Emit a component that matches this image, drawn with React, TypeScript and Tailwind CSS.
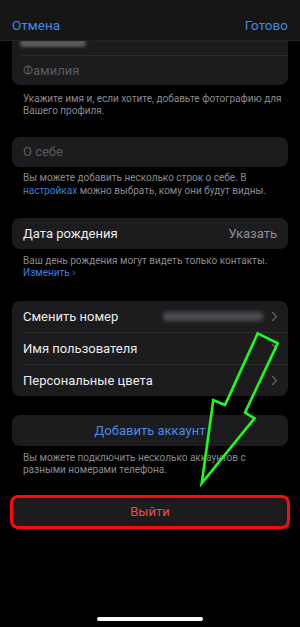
import React from "react";

const font = { fontFamily: "Roboto, 'Noto Sans', sans-serif" };

function Chevron() {
  return (
    <svg width="7" height="11" viewBox="0 0 7 11" className="shrink-0">
      <path d="M1.5 1.5 L5.5 5.5 L1.5 9.5" fill="none" stroke="#5d5d62" strokeWidth="1.5" strokeLinecap="round" strokeLinejoin="round" />
    </svg>
  );
}

export default function App() {
  return (
    <div className="relative w-[300px] h-[627px] bg-black overflow-hidden text-[#ececec]" style={font}>
      <div className="relative z-10 h-[41px] pt-[10px] px-[12px] flex items-center justify-between bg-[#161617] border-b border-[#222224]">
        <span className="text-[13.5px] text-[#3d8ae8]">Отмена</span>
        <span className="text-[13.5px] text-[#3d8ae8]">Готово</span>
      </div>
      <div className="-mt-[15px]">
        <div className="mx-[12px] rounded-[8px] bg-[#1c1c1e]">
          <div className="h-[29px] pl-[8px] flex items-center pt-[5px]">
            <div className="w-[66px] h-[7px] rounded-[3px] bg-[#5a5a5e] blur-[1.5px]" />
          </div>
          <div className="ml-[10px] h-px bg-[#2c2c2e]" />
          <div className="h-[29px] pl-[11px] flex items-center text-[13px] text-[#5b5b5f]">Фамилия</div>
        </div>
        <p className="mt-[8px] pl-[23px] pr-[12px] text-[10px] leading-[11.5px] text-[#8a8a8f]">
          Укажите имя и, если хотите, добавьте фотографию для Вашего профиля.
        </p>

        <div className="mt-[21px] mx-[12px] h-[30px] rounded-[8px] bg-[#1c1c1e] flex items-center pl-[11px] text-[13px] text-[#5b5b5f]">
          О себе
        </div>
        <p className="mt-[5px] pl-[23px] pr-[12px] text-[10px] leading-[12.5px] text-[#8a8a8f]">
          Вы можете добавить несколько строк о себе. В<br />
          <span className="text-[#3b7fd6]">настройках</span> можно выбрать, кому они будут видны.
        </p>

        <div className="mt-[21px] mx-[12px] h-[31px] rounded-[8px] bg-[#1c1c1e] flex items-center justify-between px-[11px] text-[13px]">
          <span className="text-[#ececec]">Дата рождения</span>
          <span className="text-[#8e8e93]">Указать</span>
        </div>
        <p className="mt-[6px] pl-[23px] pr-[12px] text-[10px] leading-[12px] text-[#8a8a8f]">
          Ваш день рождения могут видеть только контакты.
          <br />
          <span className="text-[#3b7fd6]">Изменить ›</span>
        </p>

        <div className="mt-[22px] mx-[12px] rounded-[8px] bg-[#1c1c1e] text-[13px]">
          <div className="h-[31px] flex items-center justify-between pl-[11px] pr-[10px]">
            <span>Сменить номер</span>
            <div className="flex items-center gap-[8px]">
              <div className="w-[100px] h-[9px] rounded-[4px] bg-[#4e4e52] blur-[2px]" />
              <Chevron />
            </div>
          </div>
          <div className="ml-[11px] h-px bg-[#2c2c2e]" />
          <div className="h-[31px] flex items-center justify-between pl-[11px] pr-[10px]">
            <span>Имя пользователя</span>
            <Chevron />
          </div>
          <div className="ml-[11px] h-px bg-[#2c2c2e]" />
          <div className="h-[31px] flex items-center justify-between pl-[11px] pr-[10px]">
            <span>Персональные цвета</span>
            <Chevron />
          </div>
        </div>

        <div className="mt-[19px] mx-[12px] h-[31px] rounded-[8px] bg-[#1c1c1e] flex items-center justify-center text-[13px] text-[#4a8ae6]">
          Добавить аккаунт
        </div>
        <p className="mt-[6px] pl-[23px] pr-[12px] text-[10px] leading-[11.5px] text-[#8a8a8f]">
          Вы можете подключить несколько аккаунтов с<br />разными номерами телефона.
        </p>

        <div className="mt-[20px] mx-[10px] h-[34px] rounded-[8px] border-[3px] border-[#ff0a0a] bg-[#1c1c1e] flex items-center justify-center text-[13px] text-[#e0524c]">
          Выйти
        </div>
      </div>

      <svg className="absolute left-0 top-0 pointer-events-none" width="300" height="627" viewBox="0 0 300 627">
        <polygon
          points="257.7,333.3 277.7,343.3 245,412.5 254.5,418.3 201.7,483.3 213.3,400 225,405"
          fill="none"
          stroke="#1aff1a"
          strokeWidth="2.6"
          strokeLinejoin="miter"
        />
      </svg>

      <div className="absolute left-[97px] bottom-[6px] w-[106px] h-[4px] rounded-full bg-white" />
    </div>
  );
}
